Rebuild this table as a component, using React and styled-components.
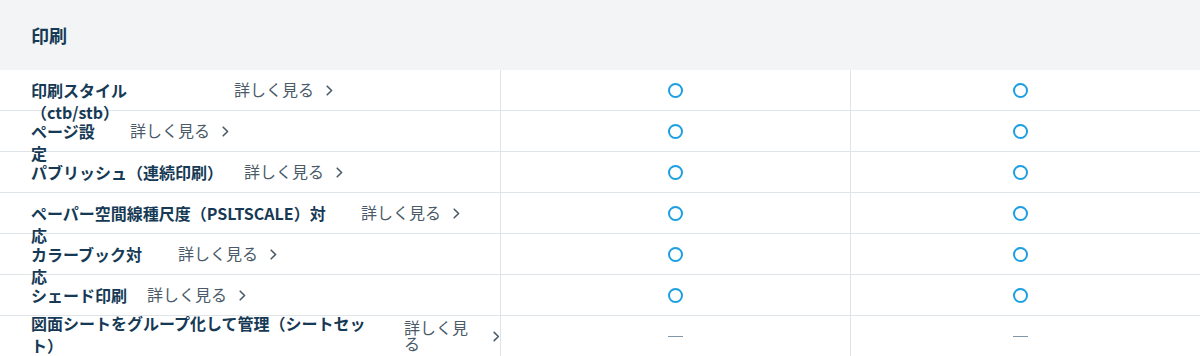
import styled, { createGlobalStyle } from "styled-components"

const GlobalStyle = createGlobalStyle`
body {
  margin: 0;
  background: #ffffff;
  font-family: "Noto Sans CJK JP", "Noto Sans", sans-serif;
}
`;

// "\n" marks where the reference breaks a name that would otherwise fit
const features = [
    { name: "印刷スタイル\n（ctb/stb）", w: 183, pc: true, mac: true },
    { name: "ページ設定", w: 79, pc: true, mac: true },
    { name: "パブリッシュ（連続印刷）", w: 193, pc: true, mac: true },
    { name: "ペーパー空間線種尺度（PSLTSCALE）対応", w: 310, pc: true, mac: true },
    { name: "カラーブック対応", w: 127, pc: true, mac: true },
    { name: "シェード印刷", w: 96, pc: true, mac: true },
    { name: "図面シートをグループ化して管理（シートセット）", w: 353, pc: false, mac: false, free: true },
]

const Chevron = () => (
    <svg width="7" height="11" viewBox="0 0 7 11" fill="none">
        <path d="M1.2 1.2 L5.6 5.5 L1.2 9.8" stroke="#4a5a68" strokeWidth="1.6" strokeLinecap="round" strokeLinejoin="round" />
    </svg>
)

const App = () => {
    return (
    <Section>
        <GlobalStyle />
        <Heading>印刷</Heading>
        <Table>
            {features.map((f) => (
                <Row key={f.name}>
                    <FeatureCell>
                        <Label $w={f.w} $free={f.free}>{f.name}</Label>
                        <More href="#">
                            <MoreText>詳しく見る</MoreText>
                            <Chevron />
                        </More>
                    </FeatureCell>
                    <MarkCell>{f.pc ? <Circle /> : <Dash />}</MarkCell>
                    <MarkCell $last>{f.mac ? <Circle /> : <Dash />}</MarkCell>
                </Row>
            ))}
        </Table>
    </Section>
    )
}

const Section = styled.section`
width: 1200px;
`;

const Heading = styled.h2`
margin: 0;
height: 70px;
display: flex;
align-items: center;
padding-left: 31px;
background: #f3f4f6;
color: #163a55;
font-size: 18px;
font-weight: 700;
`;

const Table = styled.div`
display: flex;
flex-direction: column;
`;

const Row = styled.div`
display: grid;
grid-template-columns: 500px 350px 1fr;
height: 40px;
border-bottom: 1px solid #dfe4e8;
`;

const FeatureCell = styled.div`
display: flex;
align-items: center;
gap: 20px;
padding-left: 31px;
min-width: 0;
`;

const Label = styled.div`
flex: none;
width: ${(p) => p.$w}px;
height: ${(p) => (p.$free ? "auto" : "22px")};
margin-top: ${(p) => (p.$free ? "-4px" : "0")};
white-space: pre-line;
color: #163a55;
font-size: 16px;
font-weight: 700;
line-height: 22px;
`;

const More = styled.a`
flex: 0 1 auto;
min-width: 0;
display: flex;
align-items: center;
gap: 12px;
color: #4a5a68;
text-decoration: none;
font-size: 16px;
line-height: 16px;
`;

const MoreText = styled.span`
min-width: 0;
margin-top: -2px;
`;

const MarkCell = styled.div`
display: flex;
justify-content: center;
align-items: center;
border-left: 1px solid #dfe4e8;
padding-right: ${(p) => (p.$last ? "10px" : "0")};
`;

const Circle = styled.span`
width: 15px;
height: 15px;
box-sizing: border-box;
border: 2px solid #1c9fe0;
border-radius: 50%;
`;

const Dash = styled.span`
width: 15px;
height: 1px;
background: #8396a6;
`;

export default App
